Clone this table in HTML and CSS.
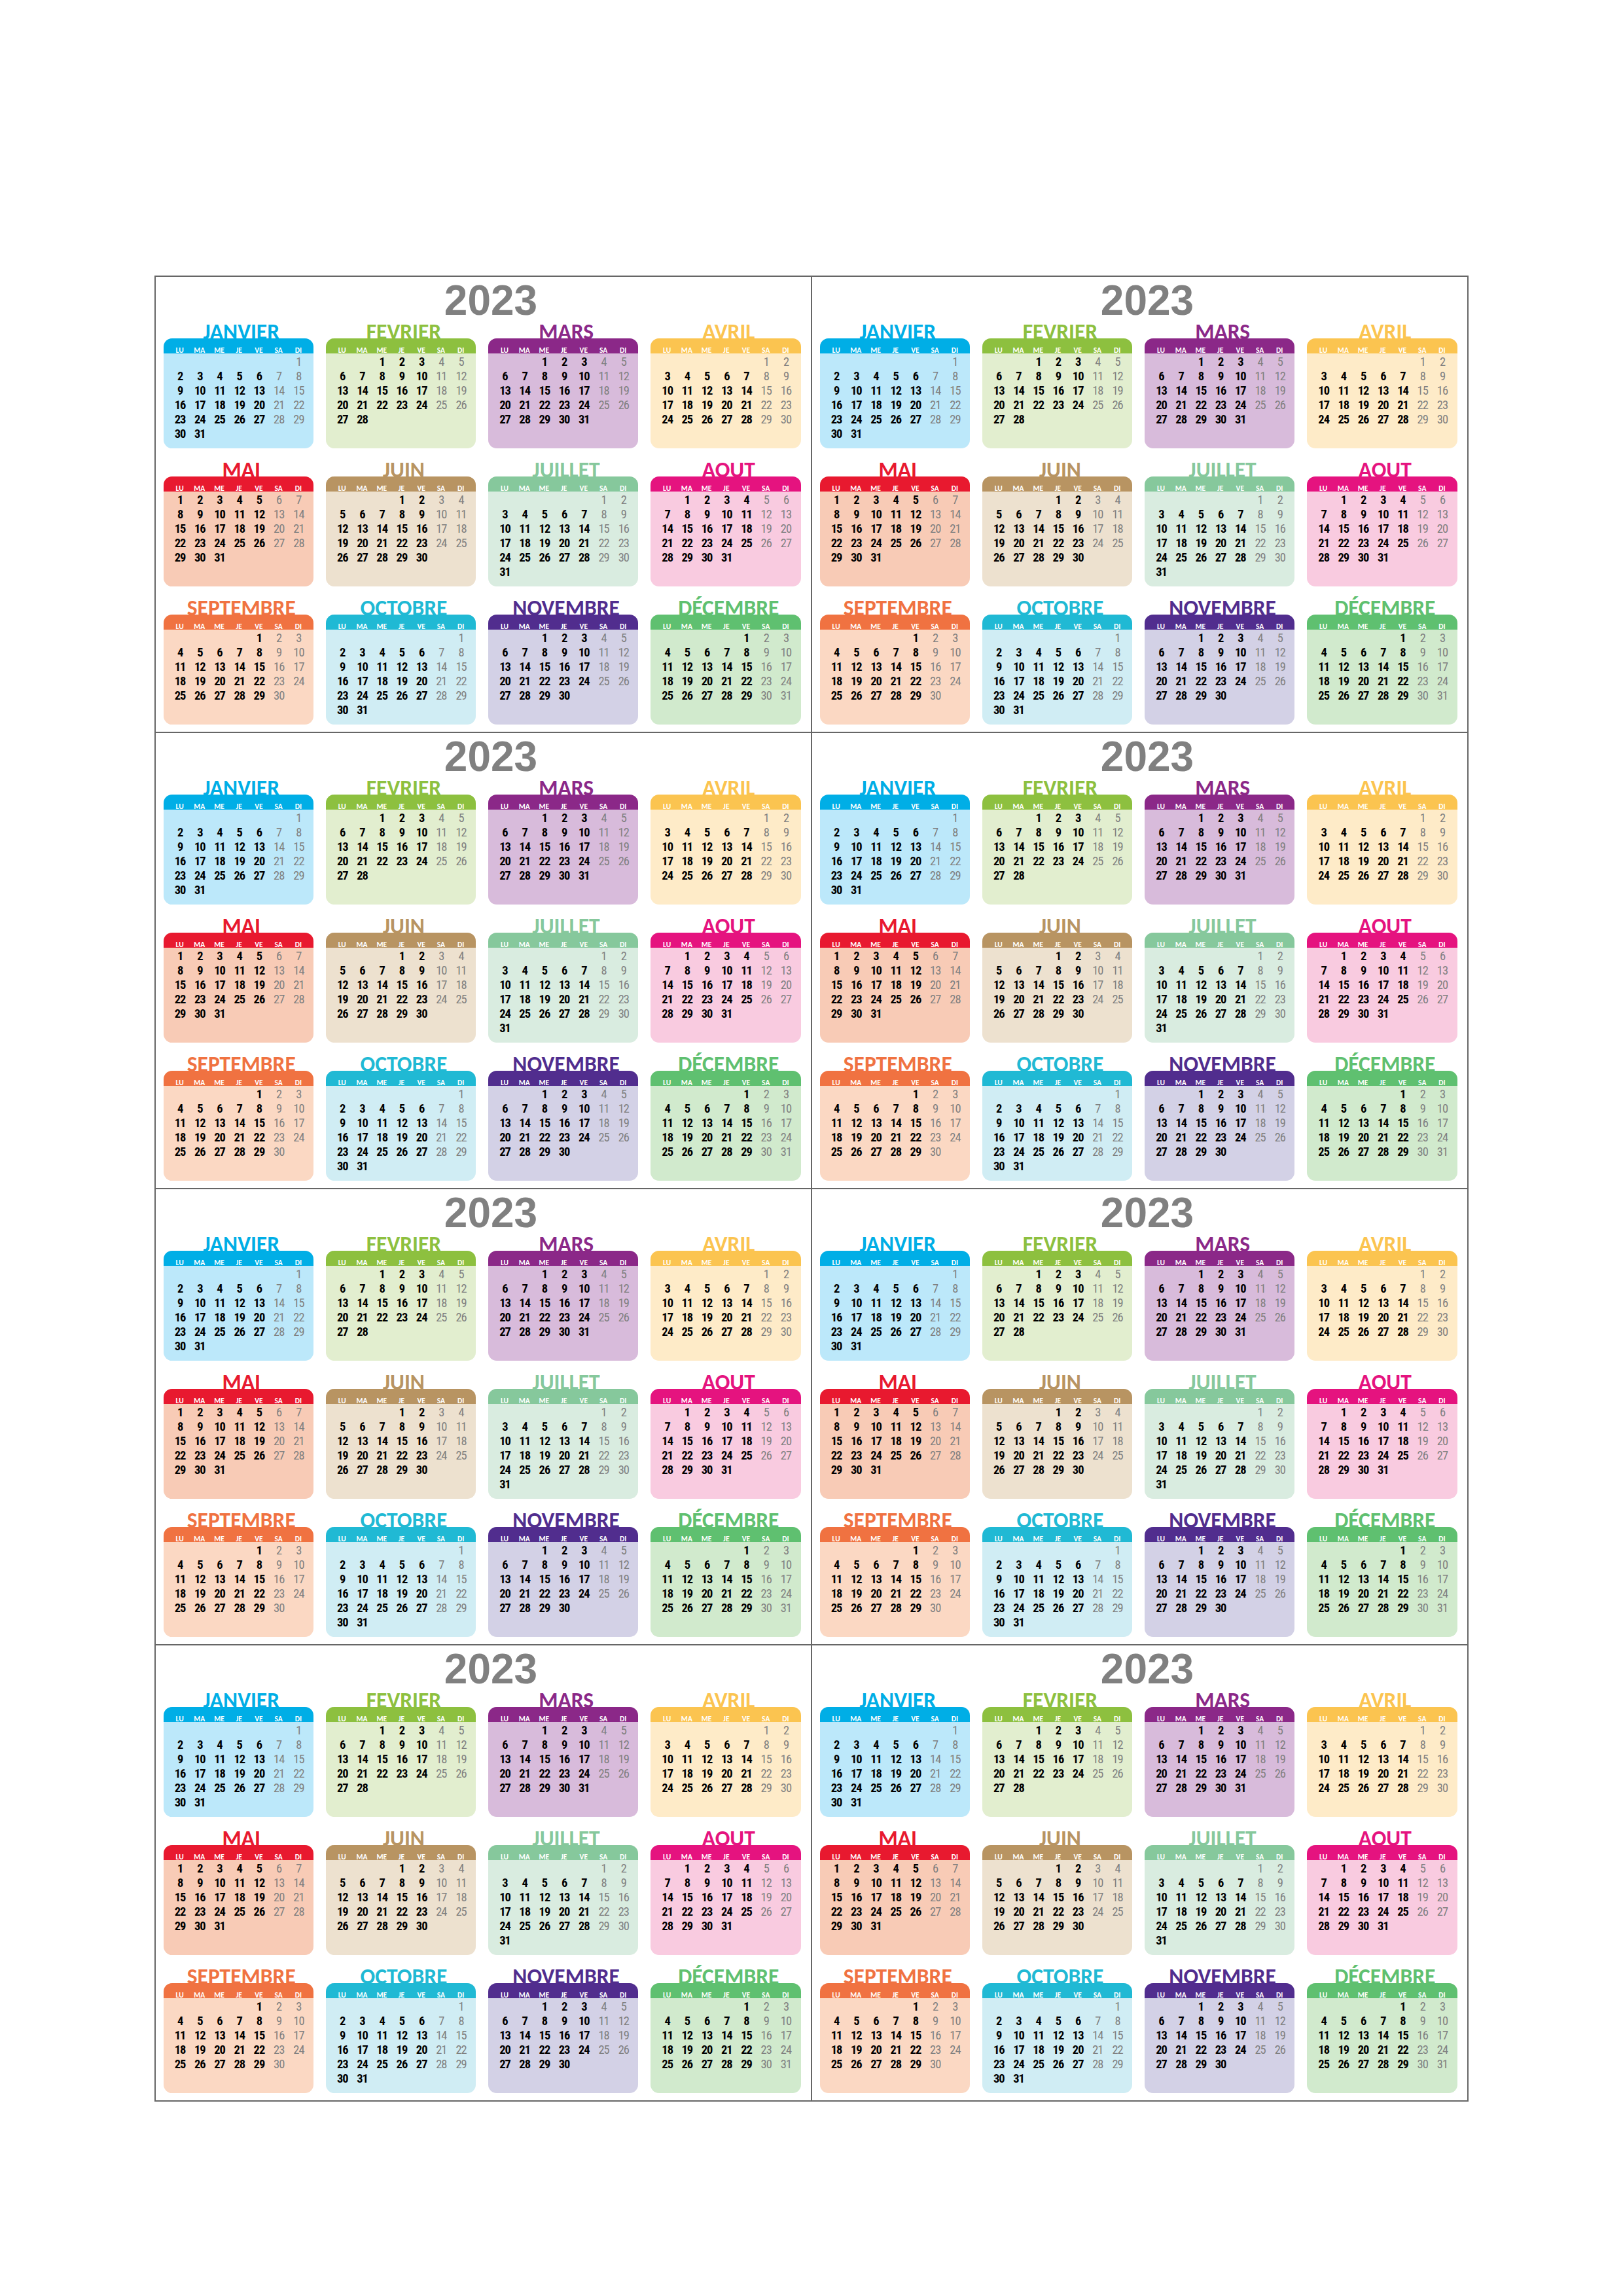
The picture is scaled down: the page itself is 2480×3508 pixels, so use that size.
FILE: index.html
```html
<!DOCTYPE html>
<html lang="fr">
<head>
<meta charset="utf-8">
<title>Calendrier 2023</title>
<link rel="stylesheet" href="styles.css">
</head>
<body>
<main class="sheet">
  <section class="panel"><h1 class="year">2023</h1><div class="months"></div></section>
  <section class="panel"><h1 class="year">2023</h1><div class="months"></div></section>
  <section class="panel"><h1 class="year">2023</h1><div class="months"></div></section>
  <section class="panel"><h1 class="year">2023</h1><div class="months"></div></section>
  <section class="panel"><h1 class="year">2023</h1><div class="months"></div></section>
  <section class="panel"><h1 class="year">2023</h1><div class="months"></div></section>
  <section class="panel"><h1 class="year">2023</h1><div class="months"></div></section>
  <section class="panel"><h1 class="year">2023</h1><div class="months"></div></section>
</main>
<script src="script.js"></script>
</body>
</html>
```
FILE: styles.css
```css
html, body {
  margin: 0;
  padding: 0;
  background: #ffffff;
}
body {
  width: 2480px;
  height: 3508px;
  overflow: hidden;
}
.sheet {
  margin: 421px 0 0 236px;
  width: 2008px;
  box-sizing: border-box;
  padding: 2px;
  display: grid;
  grid-template-columns: 1001px 1001px;
  grid-template-rows: repeat(4, 695px);
  gap: 2px;
  background: #666666;
}
.panel {
  background: #ffffff;
  padding-top: 5px;
  box-sizing: border-box;
  overflow: hidden;
}
.year {
  margin: 0;
  padding-left: 23px;
  text-align: center;
  font-family: "Liberation Sans", Arial, sans-serif;
  font-weight: bold;
  font-size: 64px;
  line-height: 63px;
  color: #808080;
}
.months {
  display: grid;
  grid-template-columns: repeat(4, 229.5px);
  column-gap: 18.7px;
  row-gap: 17px;
  padding-left: 11.5px;
}
.month {
  display: flex;
  flex-direction: column;
}
.mname {
  margin: 0 0 -6px 0;
  padding-left: 9px;
  text-align: center;
  font-family: Carlito, Lato, "Open Sans", sans-serif;
  font-weight: bold;
  font-size: 33.5px;
  line-height: 32px;
  color: var(--c);
  white-space: nowrap;
}
.card {
  position: relative;
  height: 168px;
  border-radius: 13px;
  overflow: hidden;
  background: var(--l);
}
.head {
  height: 23px;
  box-sizing: border-box;
  padding: 13px 8px 0 10px;
  background: var(--c);
  display: grid;
  grid-template-columns: repeat(7, 1fr);
  text-align: center;
  font-family: Carlito, Lato, "Open Sans", sans-serif;
  font-weight: bold;
  font-size: 11.5px;
  line-height: 10px;
  color: #ffffff;
}
.days {
  padding: 1.5px 8px 0 10px;
  display: grid;
  grid-template-columns: repeat(7, 1fr);
  grid-auto-rows: 22.2px;
  text-align: center;
  font-family: "Roboto Condensed", Roboto, "DejaVu Sans Condensed", sans-serif;
  font-stretch: condensed;
  font-weight: bold;
  font-size: 18.5px;
  line-height: 22.2px;
  letter-spacing: -1px;
  color: #000000;
}
.days span {
  padding-left: 1px;
}
.days .we {
  font-weight: normal;
  color: #808080;
}
.m1  { --c: #00aee6; --l: #bce8fa; }
.m2  { --c: #8dc03f; --l: #e2eecf; }
.m3  { --c: #8b2888; --l: #d8bbdb; }
.m4  { --c: #fbc450; --l: #feebc8; }
.m5  { --c: #e8192f; --l: #f8cbb6; }
.m6  { --c: #b89462; --l: #ede1cf; }
.m7  { --c: #86c89c; --l: #d9ece0; }
.m8  { --c: #e5137f; --l: #f9cbe0; }
.m9  { --c: #f07241; --l: #fbd8c3; }
.m10 { --c: #20b9d4; --l: #d0edf4; }
.m11 { --c: #512d8e; --l: #d3d1e6; }
.m12 { --c: #5fc070; --l: #d1eacd; }
```
FILE: script.js
```js
(function () {
  var names = ["JANVIER", "FEVRIER", "MARS", "AVRIL", "MAI", "JUIN", "JUILLET", "AOUT", "SEPTEMBRE", "OCTOBRE", "NOVEMBRE", "DÉCEMBRE"];
  var dn = ["LU", "MA", "ME", "JE", "VE", "SA", "DI"];
  var boxes = document.querySelectorAll('.months');
  for (var b = 0; b < boxes.length; b++) {
    var box = boxes[b];
    for (var m = 0; m < 12; m++) {
      var month = document.createElement('div');
      month.className = 'month m' + (m + 1);
      var title = document.createElement('div');
      title.className = 'mname';
      title.textContent = names[m];
      month.appendChild(title);
      var card = document.createElement('div');
      card.className = 'card';
      var head = document.createElement('div');
      head.className = 'head';
      for (var k = 0; k < 7; k++) {
        var s = document.createElement('span');
        s.textContent = dn[k];
        head.appendChild(s);
      }
      card.appendChild(head);
      var days = document.createElement('div');
      days.className = 'days';
      var first = (new Date(2023, m, 1).getDay() + 6) % 7;
      var len = new Date(2023, m + 1, 0).getDate();
      for (var i = 0; i < first; i++) days.appendChild(document.createElement('span'));
      for (var d = 1; d <= len; d++) {
        var c = document.createElement('span');
        if ((first + d - 1) % 7 >= 5) c.className = 'we';
        c.textContent = d;
        days.appendChild(c);
      }
      card.appendChild(days);
      month.appendChild(card);
      box.appendChild(month);
    }
  }
})();
```
